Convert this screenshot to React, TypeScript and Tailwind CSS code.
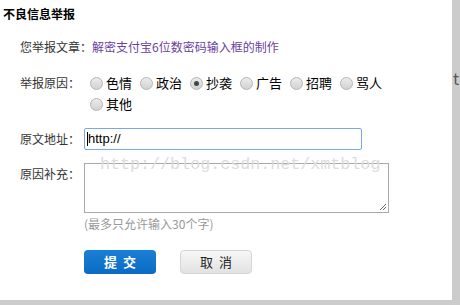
const cjk = "font-['Microsoft_YaHei','Noto_Sans_CJK_SC',sans-serif]";

function Radio({ label, checked }: { label: string; checked?: boolean }) {
  return (
    <label className="flex items-center mr-[8px]">
      <span className="relative w-[13px] h-[13px] rounded-full border border-[#b5b5b5] bg-gradient-to-b from-[#ececec] to-[#d2d2d2] flex items-center justify-center mr-[3px]">
        {checked && <span className="w-[5px] h-[5px] rounded-full bg-[#444]" />}
      </span>
      <span className="text-[13px] text-black">{label}</span>
    </label>
  );
}

export default function App() {
  const reasons = ['色情', '政治', '抄袭', '广告', '招聘', '骂人', '其他'];
  return (
    <div className={`w-[460px] h-[305px] bg-[#cccccc] flex ${cjk} overflow-hidden`}>
      <div className="w-[452px] h-[300px] bg-white relative">
        {/* title */}
        <p className="text-[12px] font-bold text-black pl-[3px] pt-[6px] leading-[16px]">不良信息举报</p>

        <div className="pl-[20px] pt-[17px] text-[12px] text-[#333]">
          <div className="flex items-center h-[16px]">
            <span>您举报文章：</span>
            <span className="text-[#6b3fa0]">解密支付宝6位数密码输入框的制作</span>
          </div>

          <div className="flex mt-[18px]">
            <span className="w-[64px] shrink-0 leading-[20px]">举报原因：</span>
            <div className="flex flex-wrap w-[320px] pl-[6px] gap-y-[1px]">
              {reasons.map((r) => (
                <div key={r} className="h-[20px] flex items-center">
                  <Radio label={r} checked={r === '抄袭'} />
                </div>
              ))}
            </div>
          </div>

          <div className="flex items-center mt-[14px]">
            <span className="w-[64px] shrink-0">原文地址：</span>
            <div className="w-[278px] h-[22px] border border-[#7aa7e6] rounded-[2px] flex items-center pl-[2px] text-[13px] text-black">
              <span className="w-px h-[14px] bg-black" />
              <span className="font-['Arial','Liberation_Sans',sans-serif]">http://</span>
            </div>
          </div>

          <div className="flex mt-[13px]">
            <span className="w-[64px] shrink-0 pt-[2px]">原因补充：</span>
            <div className="relative w-[305px] h-[50px] border border-[#a9a9a9]">
              <svg className="absolute right-[1px] bottom-[1px]" width="8" height="8" viewBox="0 0 8 8">
                <path d="M7 1L1 7M7 4L4 7" stroke="#666" strokeWidth="1" />
              </svg>
            </div>
          </div>

          <p className="ml-[64px] mt-[2px] text-[#999] leading-[18px]">(最多只允许输入30个字)</p>

          <div className="flex ml-[64px] mt-[17px] gap-[24px]">
            <button className="w-[72px] h-[24px] rounded-[4px] bg-gradient-to-b from-[#1a7fd6] to-[#0a6bc2] text-white font-bold text-[13px] tracking-[6px] pl-[6px]">
              提交
            </button>
            <button className="w-[72px] h-[24px] rounded-[4px] border border-[#d6d6d6] bg-gradient-to-b from-[#f7f7f7] to-[#e2e2e2] text-[#222] text-[13px] tracking-[6px] pl-[6px]">
              取消
            </button>
          </div>
        </div>

        {/* watermark */}
        <span className="absolute left-[100px] top-[152px] font-['Liberation_Mono',monospace] text-[16.7px] text-[#dcdcdc] pointer-events-none">
          http://blog.csdn.net/xmtblog
        </span>
      </div>
      <span className="text-[16px] text-[#555] mt-[66px] ml-[1px]">t</span>
    </div>
  );
}
